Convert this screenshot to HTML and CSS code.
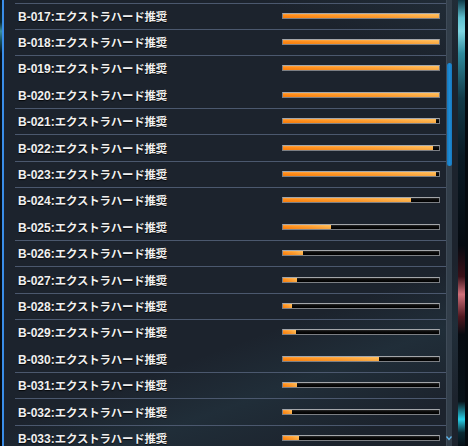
FILE: index.html
```html
<!DOCTYPE html>
<html lang="ja">
<head>
<meta charset="utf-8">
<title>クエスト一覧</title>
<link rel="stylesheet" href="styles.css">
</head>
<body>
<div class="scene">
  <div class="edge-left"></div>
  <div class="window">
    <div class="list">
      <div class="row"><span class="label"><span class="code">B-017:</span><span class="name">エクストラハード推奨</span></span><span class="bar"><span class="fill" style="width:100%"></span></span></div>
      <div class="row"><span class="label"><span class="code">B-018:</span><span class="name">エクストラハード推奨</span></span><span class="bar"><span class="fill" style="width:100%"></span></span></div>
      <div class="row"><span class="label"><span class="code">B-019:</span><span class="name">エクストラハード推奨</span></span><span class="bar"><span class="fill" style="width:100%"></span></span></div>
      <div class="row no-line"><span class="label"><span class="code">B-020:</span><span class="name">エクストラハード推奨</span></span><span class="bar"><span class="fill" style="width:100%"></span></span></div>
      <div class="row"><span class="label"><span class="code">B-021:</span><span class="name">エクストラハード推奨</span></span><span class="bar"><span class="fill" style="width:98%"></span></span></div>
      <div class="row"><span class="label"><span class="code">B-022:</span><span class="name">エクストラハード推奨</span></span><span class="bar"><span class="fill" style="width:96%"></span></span></div>
      <div class="row"><span class="label"><span class="code">B-023:</span><span class="name">エクストラハード推奨</span></span><span class="bar"><span class="fill" style="width:98%"></span></span></div>
      <div class="row"><span class="label"><span class="code">B-024:</span><span class="name">エクストラハード推奨</span></span><span class="bar"><span class="fill" style="width:82%"></span></span></div>
      <div class="row no-line"><span class="label"><span class="code">B-025:</span><span class="name">エクストラハード推奨</span></span><span class="bar"><span class="fill" style="width:31%"></span></span></div>
      <div class="row"><span class="label"><span class="code">B-026:</span><span class="name">エクストラハード推奨</span></span><span class="bar"><span class="fill" style="width:13%"></span></span></div>
      <div class="row"><span class="label"><span class="code">B-027:</span><span class="name">エクストラハード推奨</span></span><span class="bar"><span class="fill" style="width:9%"></span></span></div>
      <div class="row"><span class="label"><span class="code">B-028:</span><span class="name">エクストラハード推奨</span></span><span class="bar"><span class="fill" style="width:6%"></span></span></div>
      <div class="row"><span class="label"><span class="code">B-029:</span><span class="name">エクストラハード推奨</span></span><span class="bar"><span class="fill" style="width:8.5%"></span></span></div>
      <div class="row no-line"><span class="label"><span class="code">B-030:</span><span class="name">エクストラハード推奨</span></span><span class="bar"><span class="fill" style="width:61.5%"></span></span></div>
      <div class="row"><span class="label"><span class="code">B-031:</span><span class="name">エクストラハード推奨</span></span><span class="bar"><span class="fill" style="width:8.8%"></span></span></div>
      <div class="row"><span class="label"><span class="code">B-032:</span><span class="name">エクストラハード推奨</span></span><span class="bar"><span class="fill" style="width:5.5%"></span></span></div>
      <div class="row"><span class="label"><span class="code">B-033:</span><span class="name">エクストラハード推奨</span></span><span class="bar"><span class="fill" style="width:10%"></span></span></div>
    </div>
    <div class="scrollbar">
      <div class="thumb"></div>
      <div class="track-rest"></div>
      <svg class="arrow" width="6" height="6" viewBox="0 0 6 6"><path d="M0.5 1.5 L3 4.5 L5.5 1.5" fill="none" stroke="#5fb6ea" stroke-width="1.3"/></svg>
    </div>
    <div class="gap"></div>
    <div class="rim"></div>
  </div>
  <div class="edge-right"></div>
</div>
</body>
</html>
```

FILE: styles.css
```css
html, body {
  margin: 0;
  padding: 0;
  background: #050a0f;
}

.scene {
  display: flex;
  width: 468px;
  height: 446px;
  overflow: hidden;
}

.edge-left {
  width: 2px;
  flex: none;
  background: linear-gradient(180deg, #08141c 0%, #0c2a33 5%, #3d8f9e 7%, #1b5560 9%, #06101a 12%, #04080d 100%);
}

.window {
  flex: none;
  width: 456px;
  display: flex;
  border-left: 2px solid #3a8de8;
  padding-left: 11px;
  box-sizing: border-box;
  background-color: #1c232d;
  background-image:
    linear-gradient(160deg, rgba(0,0,0,0) 70%, rgba(70,140,160,0.10) 80%, rgba(0,0,0,0) 92%),
    linear-gradient(200deg, rgba(90,150,170,0.08) 0%, rgba(0,0,0,0) 12%);
}

.list {
  width: 431px;
  flex: none;
  padding-top: 2.5px;
}

.row {
  height: 26.4px;
  box-sizing: border-box;
  border-top: 1px solid #4b586e;
  display: flex;
  align-items: center;
  padding-left: 3px;
  padding-right: 6px;
}

.row.no-line {
  border-top-color: transparent;
}

.label {
  flex: 1;
  color: #f0f0f0;
  font-weight: bold;
  white-space: nowrap;
  text-shadow: 0 1px 1px rgba(0,0,0,0.8);
  line-height: 14px;
}

.code {
  font-family: "Liberation Sans", "Noto Sans CJK JP", sans-serif;
  font-size: 12px;
}

.name {
  font-family: "Noto Sans CJK JP", sans-serif;
  font-size: 11.4px;
  letter-spacing: -0.1px;
}

.bar {
  flex: none;
  width: 158px;
  height: 6px;
  box-sizing: border-box;
  border: 1px solid #7c7f84;
  border-top-color: #a3a6aa;
  background: linear-gradient(180deg, #2a2a2a 0%, #0b0b0b 40%, #000 100%);
  display: flex;
  margin-top: -1px;
}

.fill {
  display: block;
  height: 100%;
  background:
    linear-gradient(180deg, rgba(255,225,160,0.30) 0%, rgba(255,255,255,0) 45%, rgba(180,70,0,0.12) 100%),
    linear-gradient(90deg, #ff8612 0%, #ff921f 25%, #ff9e30 60%, #ffb048 90%, #ffb54e 100%);
}

.scrollbar {
  width: 6px;
  flex: none;
  display: flex;
  flex-direction: column;
  align-items: center;
  background: #323e4a;
  box-shadow: inset 1px 0 0 #3f4b58;
  padding-top: 63px;
  padding-bottom: 5px;
  box-sizing: border-box;
}

.thumb {
  width: 5px;
  height: 103px;
  background: linear-gradient(90deg, #1877bd 0%, #1d8cd6 50%, #1878bf 100%);
  border-radius: 3px;
}

.track-rest {
  flex: 1;
}

.arrow {
  display: block;
}

.gap {
  width: 6px;
  flex: none;
}

.rim {
  width: 3px;
  flex: none;
  background: linear-gradient(90deg, #3b82d6 0%, #8cc6ff 50%, #3a86e0 100%);
}

.edge-right {
  width: 7px;
  flex: none;
  background: linear-gradient(180deg, #0e3a48 0%, #5fc0cf 4%, #7fd6e2 7%, #2f8a9c 12%, #123a48 22%, #0a1a24 35%, #050a10 55%, #3a1018 62%, #d0707a 66%, #501820 71%, #060a10 75%, #081218 90%, #28d0e8 94%, #0a2a34 97%, #061016 100%);
}
```
